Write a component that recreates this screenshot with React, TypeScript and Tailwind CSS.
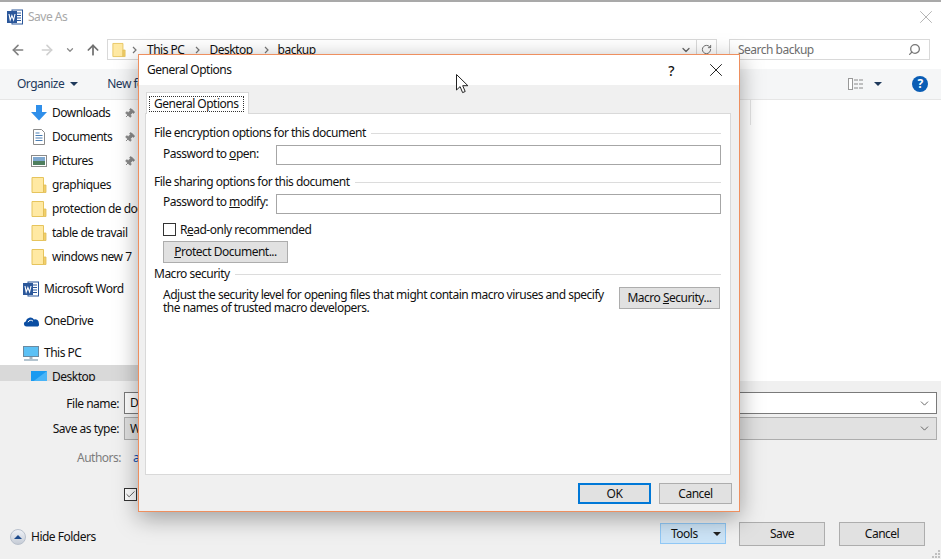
import React from "react";
import { ArrowLeft, ArrowRight, ArrowUp, ChevronDown, RotateCw, Search, X, Pin, Check } from "lucide-react";

const Folder = ({ className = "" }: { className?: string }) => (
  <svg viewBox="0 0 16 18" className={className}>
    <path d="M1 1.5h11.5v15H1z" fill="#ffe9a3" stroke="#e6c45c" />
    <path d="M12.5 9h2.5v7.5h-2.5z" fill="#f2cf69" stroke="#e0bd55" strokeWidth="0.8" />
  </svg>
);

const WordIcon = () => (
  <svg viewBox="0 0 16 16" className="w-4 h-4">
    <rect x="5" y="1" width="10.5" height="14" fill="#fff" stroke="#2b579a" />
    <path d="M9 4h5M9 6.5h5M9 9h5M9 11.5h5" stroke="#2b579a" strokeWidth="1" />
    <rect x="0" y="2" width="10" height="12" fill="#2b579a" />
    <path d="M2 5l1.2 6 1.7-4.4L6.6 11 8 5" fill="none" stroke="#fff" strokeWidth="1.1" />
  </svg>
);

const Downloads = () => (
  <svg viewBox="0 0 16 16" className="w-4 h-4">
    <path d="M5 0h6v7h5l-8 8.5L0 7h5z" fill="#2f8fea" />
  </svg>
);
const Documents = () => (
  <svg viewBox="0 0 16 16" className="w-4 h-4">
    <path d="M2.5.5h8l3 3v12h-11z" fill="#fff" stroke="#8a8a8a" />
    <path d="M4.5 4h4M4.5 6.5h7M4.5 9h7M4.5 11.5h7" stroke="#4a7fb5" />
  </svg>
);
const Pictures = () => (
  <svg viewBox="0 0 16 12" className="w-4 h-3">
    <rect x=".5" y=".5" width="15" height="11" fill="#fff" stroke="#8a8a8a" />
    <rect x="2" y="2" width="12" height="4" fill="#7fa8d0" />
    <rect x="2" y="6" width="12" height="4" fill="#4f7f5f" />
  </svg>
);
const OneDrive = () => (
  <svg viewBox="0 0 16 11" className="w-4 h-[11px]">
    <path d="M3.5 10.5A2.6 2.6 0 0 1 2.8 5.4 4.6 4.6 0 0 1 11 3.4a3.6 3.6 0 0 1 4.8 3.8 2.2 2.2 0 0 1-1 3.3z" fill="#0a4da2" />
    <path d="M5 6.2a3 3 0 0 1 5-1" fill="none" stroke="#fff" strokeWidth="1" />
  </svg>
);
const Monitor = () => (
  <svg viewBox="0 0 16 15" className="w-4 h-[15px]">
    <rect x=".5" y=".5" width="15" height="10" fill="#5cc1f5" stroke="#6b8aa0" />
    <path d="M6.5 11h3v2h-3z" fill="#a5b5c0" />
    <path d="M1 14h14" stroke="#9ab0bf" strokeWidth="1.5" />
  </svg>
);
const DesktopIcon = () => (
  <svg viewBox="0 0 16 13" className="w-4 h-[13px]">
    <rect x="0" y="0" width="16" height="12" fill="#1a9af0" />
    <path d="M0 12L16 0v12z" fill="#49b4f7" />
    <path d="M0 12.5h5M11 12.5h5" stroke="#fff" />
  </svg>
);

type NavItem = { label: string; icon: React.ReactNode; pin?: boolean };

const quick: NavItem[] = [
  { label: "Downloads", icon: <Downloads />, pin: true },
  { label: "Documents", icon: <Documents />, pin: true },
  { label: "Pictures", icon: <Pictures />, pin: true },
  { label: "graphiques", icon: <Folder className="w-4 h-[18px]" /> },
  { label: "protection de document", icon: <Folder className="w-4 h-[18px]" /> },
  { label: "table de travail", icon: <Folder className="w-4 h-[18px]" /> },
  { label: "windows new 7", icon: <Folder className="w-4 h-[18px]" /> },
];

const Crumb = ({ className = "" }: { className?: string }) => (
  <svg viewBox="0 0 5 8" className={`w-[5px] h-2 ${className}`}>
    <path d="M1 1l3 3-3 3" fill="none" stroke="#777" strokeWidth="1.2" />
  </svg>
);

const GroupHead = ({ children }: { children: React.ReactNode }) => (
  <div className="flex items-center gap-[5px] h-4 leading-4">
    <span>{children}</span>
    <span className="flex-1 h-px bg-[#dcdcdc]" />
  </div>
);

const DlgButton = ({ children, className = "" }: { children: React.ReactNode; className?: string }) => (
  <button className={`h-[22px] bg-[#e1e1e1] border border-[#adadad] text-center leading-none ${className}`}>{children}</button>
);

export default function App() {
  return (
    <div className="relative w-[941px] h-[559px] overflow-hidden bg-white text-[12px] text-[#111] font-['Noto_Sans','Open_Sans',sans-serif] tracking-[-0.5px]">
      {/* Save As window */}
      <div className="flex flex-col h-full border-t-2 border-[#a9a9a9]">
        <div className="h-[30px] flex items-center pl-[7px] pr-[4px] shrink-0">
          <WordIcon />
          <span className="ml-[5px] text-[#a8a8a8]">Save As</span>
          <X className="ml-auto w-[22px] h-[22px] text-[#9a9a9a]" strokeWidth={0.8} />
        </div>
        <div className="h-[37px] pb-[2px] flex items-center pl-[10px] shrink-0">
          <ArrowLeft className="w-[16px] h-[16px] text-[#808080]" strokeWidth={2.4} />
          <ArrowRight className="ml-[13px] w-[16px] h-[16px] text-[#d0d0d0]" strokeWidth={2.4} />
          <ChevronDown className="ml-[10px] w-[10px] h-[10px] text-[#8a8a8a]" strokeWidth={3} />
          <ArrowUp className="ml-[10px] w-[16px] h-[16px] text-[#707070]" strokeWidth={2.6} />
          <div className="ml-[6px] w-[610px] h-[21px] border border-[#d9d9d9] flex items-center pl-[4px]">
            <Folder className="w-[14px] h-[16px]" />
            <Crumb className="ml-[6px] mr-[10px]" />
            <span>This PC</span>
            <Crumb className="ml-[11px] mr-[9px]" />
            <span>Desktop</span>
            <Crumb className="ml-[11px] mr-[9px]" />
            <span>backup</span>
            <ChevronDown className="ml-auto mr-[4px] w-[12px] h-[12px] text-[#666]" strokeWidth={2.5} />
            <div className="w-5 h-full border-l border-[#d9d9d9] flex items-center justify-center">
              <RotateCw className="w-[11px] h-[11px] text-[#666]" />
            </div>
          </div>
          <div className="ml-[12px] w-[201px] h-[21px] border border-[#d9d9d9] flex items-center pl-[8px] pr-[8px] text-[#6d6d6d]">
            <span>Search backup</span>
            <Search className="ml-auto w-[13px] h-[13px] -scale-x-100 text-[#777]" strokeWidth={2.4} />
          </div>
        </div>
        <div className="h-[31px] bg-[#f5f6f7] border-b border-[#e6e6e6] flex items-center pl-[17px] pr-[13px] text-[#1e395b] shrink-0">
          <span>Organize</span>
          <span className="ml-[6px] w-0 h-0 border-x-[4px] border-x-transparent border-t-[4px] border-t-[#1e395b]" />
          <span className="ml-[29px]">New folder</span>
          <svg viewBox="0 0 16 12" className="ml-auto w-4 h-3">
            <rect x=".5" y=".5" width="4" height="11" fill="#fff" stroke="#999" />
            <path d="M6 2h4M11 2h4M6 6h4M11 6h4M6 10h4M11 10h4" stroke="#888" />
          </svg>
          <span className="ml-[10px] w-0 h-0 border-x-[4px] border-x-transparent border-t-[4px] border-t-[#1e395b]" />
          <span className="ml-[30px] w-4 h-4 rounded-full bg-[#0a5db5] text-white font-bold text-[12px] leading-4 text-center">?</span>
        </div>
        <div className="flex-1 flex min-h-0">
          <nav className="w-[138px] shrink-0 overflow-hidden pt-px">
            {quick.map((q) => (
              <div key={q.label} className="h-6 flex items-center relative whitespace-nowrap">
                <span className="w-[16px] ml-[31px] flex justify-center shrink-0">{q.icon}</span>
                <span className="ml-[5px]">{q.label}</span>
                {q.pin && <Pin className="absolute left-[124px] top-[7px] w-[11px] h-[11px] text-[#8a8a8a] fill-[#8a8a8a] rotate-45" />}
              </div>
            ))}
            <div className="h-6 mt-2 flex items-center pl-[23px] gap-[5px]"><WordIcon /><span>Microsoft Word</span></div>
            <div className="h-6 mt-2 flex items-center pl-[23px] gap-[5px]"><OneDrive /><span>OneDrive</span></div>
            <div className="h-6 mt-2 flex items-center pl-[23px] gap-[5px]"><Monitor /><span>This PC</span></div>
            <div className="h-6 flex items-center pl-[31px] gap-[5px] bg-[#d9d9d9]"><DesktopIcon /><span>Desktop</span></div>
          </nav>
          <div className="flex-1 pl-[612px]">
            <div className="w-px h-[25px] bg-[#e5e5e5]" />
          </div>
        </div>
        <div className="h-[178px] bg-[#f0f0f0] shrink-0 relative pt-[11px] pr-[4px]">
          <div className="flex items-center h-[22px]">
            <span className="w-[119px] text-right pt-[2px]">File name:</span>
            <div className="ml-[5px] flex-1 h-[22px] bg-white border border-[#7a7a7a] flex items-center px-[5px]">
              <span>D</span>
              <ChevronDown className="ml-auto w-[13px] h-[13px] text-[#555]" strokeWidth={1.6} />
            </div>
          </div>
          <div className="flex items-center h-[23px] mt-[3px]">
            <span className="w-[119px] text-right pt-[1px]">Save as type:</span>
            <div className="ml-[5px] flex-1 h-[23px] bg-[#e1e1e1] border border-[#adadad] flex items-center px-[5px]">
              <span>W</span>
              <ChevronDown className="ml-auto w-[13px] h-[13px] text-[#555]" strokeWidth={1.6} />
            </div>
          </div>
          <div className="flex items-center h-4 mt-[10px]">
            <span className="w-[121px] text-right text-[#7d7d7d]">Authors:</span>
            <span className="ml-[12px] text-[#0a4fb5]">a</span>
          </div>
          <div className="ml-[124px] mt-[22px] w-[13px] h-[13px] border border-[#333] bg-white flex items-center justify-center">
            <Check className="w-[11px] h-[11px] text-[#555]" strokeWidth={2} />
          </div>
          <div className="flex items-center mt-[20px] pl-[10px] pr-[12px]">
            <div className="flex items-center mt-[7px]">
              <span className="w-4 h-4 rounded-full bg-gradient-to-b from-[#eef1f6] to-[#c6ccd6] border border-[#b8c0cc] flex items-center justify-center">
                <span className="w-0 h-0 border-x-[4px] border-x-transparent border-b-[4px] border-b-[#1c4a8c]" />
              </span>
              <span className="ml-[5px]">Hide Folders</span>
            </div>
            <div className="ml-auto flex items-center">
              <div className="w-[66px] h-[21px] bg-[#cce4f7] border border-[#90c8f6] flex items-center pl-[10px]">
                <span>Tools</span>
                <span className="ml-auto mr-[4px] w-0 h-0 border-x-[4px] border-x-transparent border-t-[4px] border-t-[#222]" />
              </div>
              <DlgButton className="!h-6 w-[86px] ml-[13px]">Save</DlgButton>
              <DlgButton className="!h-6 w-[86px] ml-[14px]">Cancel</DlgButton>
            </div>
          </div>
        </div>
      </div>

      {/* General Options dialog */}
      <div className="absolute left-[138px] top-[54px] w-[602px] h-[458px] flex flex-col bg-[#f0f0f0] border border-[#ee8f5f] shadow-[0_6px_22px_rgba(0,0,0,0.35)]">
        <div className="h-[30px] bg-white flex items-center pl-[8px] shrink-0">
          <span>General Options</span>
          <span className="ml-auto mr-[31px] text-[14px] font-medium">?</span>
          <X className="mr-[12px] w-[22px] h-[22px] text-[#111]" strokeWidth={1} />
        </div>
        <div className="h-[7px] shrink-0" />
        <div className="pl-[7px] h-[22px] relative z-10 shrink-0">
          <div className="w-[103px] h-[22px] bg-white border border-[#d9d9d9] border-b-0 pl-[2px] pt-[3px]">
            <span className="block whitespace-nowrap border border-dotted border-[#333] leading-[14px] pl-[4px] w-[95px]">General Options</span>
          </div>
        </div>
        <div className="ml-[6px] mr-[8px] -mt-px h-[362px] bg-white border border-[#d9d9d9] pl-[8px] pr-[9px] pt-[11px] shrink-0">
          <GroupHead>File encryption options for this document</GroupHead>
          <div className="flex items-center h-5 mt-[4px] pl-[9px]">
            <span className="w-[113px] pb-[2px]">Password to <u>o</u>pen:</span>
            <div className="flex-1 h-5 border border-[#a6a6a6]" />
          </div>
          <div className="mt-[9px]"><GroupHead>File sharing options for this document</GroupHead></div>
          <div className="flex items-center h-5 mt-[4px] pl-[9px]">
            <span className="w-[113px] pb-[4px]">Password to <u>m</u>odify:</span>
            <div className="flex-1 h-5 border border-[#a6a6a6]" />
          </div>
          <div className="flex items-center mt-[9px] ml-[9px] h-[13px]">
            <span className="w-[13px] h-[13px] border border-[#333]" />
            <span className="ml-[4px]">R<u>e</u>ad-only recommended</span>
          </div>
          <DlgButton className="ml-[9px] mt-[5px] w-[125px] block"><u>P</u>rotect Document...</DlgButton>
          <div className="mt-[3px]"><GroupHead>Macro security</GroupHead></div>
          <div className="flex pl-[9px] mt-[5px]">
            <p className="w-[450px] leading-[13px] pt-[1px]">Adjust the security level for opening files that might contain macro viruses and specify<br />the names of trusted macro developers.</p>
            <DlgButton className="ml-auto mr-px w-[101px]">Macro <u>S</u>ecurity...</DlgButton>
          </div>
        </div>
        <div className="flex justify-end gap-2 pr-[7px] pt-[8px]">
          <button className="w-[73px] h-[21px] bg-[#e1e1e1] border-2 border-[#0078d7]">OK</button>
          <button className="w-[73px] h-[21px] bg-[#e1e1e1] border border-[#adadad]">Cancel</button>
        </div>
      </div>

      {/* mouse pointer */}
      <svg viewBox="0 0 13 20" className="absolute left-[456px] top-[74px] w-[13px] h-5">
        <path d="M.5.5v15.5l3.6-3.4 2.5 6 2.6-1.1-2.5-5.8h5.2z" fill="#fff" stroke="#222" strokeWidth="1" />
      </svg>
      {/* size grip */}
      <svg viewBox="0 0 10 10" className="absolute right-0 bottom-0 w-[10px] h-[10px]">
        <path d="M7 1h2v2H7zM4 4h2v2H4zM7 4h2v2H7zM1 7h2v2H1zM4 7h2v2H4zM7 7h2v2H7z" fill="#c0c0c0" />
      </svg>
    </div>
  );
}
